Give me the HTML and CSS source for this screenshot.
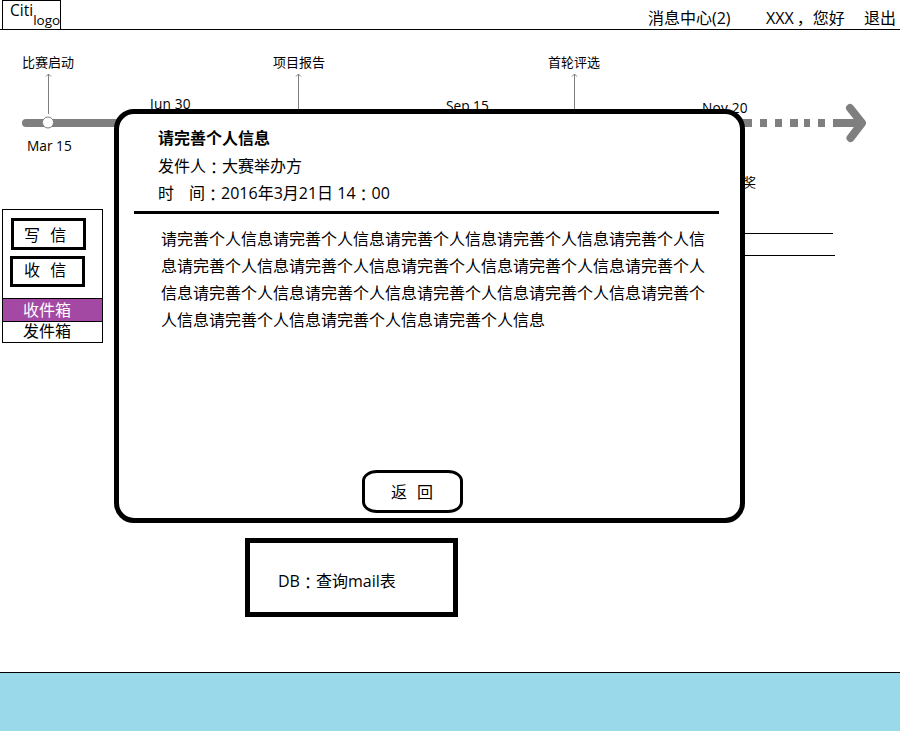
FILE: index.html
```
<!DOCTYPE html>
<html lang="zh-CN">
<head>
<meta charset="utf-8">
<title>消息中心</title>
<link rel="stylesheet" href="styles.css">
</head>
<body>
<div class="page">
  <header class="header">
    <div class="logo"><span>Citi</span><span class="logo-sub">logo</span></div>
    <nav class="nav">
      <span class="nav-messages">消息中心(2)</span>
      <span class="nav-user">XXX<span class="comma">，</span>您好</span>
      <span class="nav-exit">退出</span>
    </nav>
  </header>

  <section class="timeline">
    <svg class="track" width="900" height="179" viewBox="0 30 900 179">
      <g stroke="#7f7f7f" fill="none">
        <path d="M26 123H130" stroke-width="8" stroke-linecap="round"/>
        <path d="M740 123H752M760 123H767M775 123H782M790 123H798M804 123H810M818 123H825M833 123H862" stroke-width="8"/>
        <path d="M850 108L862 123L850.500 138" stroke-width="8" stroke-linecap="round" stroke-linejoin="round"/>
        <path d="M48.500 114V74M46 76.500L48.500 74L51 76.500M298.500 114V74M296 76.500L298.500 74L301 76.500M574.500 114V74M572 76.500L574.500 74L577 76.500"/>
        <circle cx="48" cy="122.500" r="5.500" fill="#fff"/>
      </g>
    </svg>
    <div class="stages"><span>比赛启动</span><span>项目报告</span><span>首轮评选</span></div>
    <div class="dates"><span>Jun 30</span><span>Sep 15</span><span>Nov 20</span></div>
    <div class="start-date">Mar 15</div>
    <div class="award">奖</div>
  </section>

  <main class="main">
    <aside class="sidebar">
      <div class="side-button write">写&nbsp; 信</div>
      <div class="side-button receive">收&nbsp; 信</div>
      <div class="folder active">收件箱</div>
      <div class="folder">发件箱</div>
    </aside>
    <div class="mail-list"><div class="mail-row"></div><div class="mail-row second"></div></div>
  </main>

  <div class="db-note">DB<span class="colon" lang="zh-TW">：</span>查询mail表</div>
  <footer class="footer"></footer>

  <div class="modal">
    <div class="modal-head">
      <div class="title">请完善个人信息</div>
      <div>发件人<span class="colon" lang="zh-TW">：</span>大赛举办方</div>
      <div class="time"><span class="label">时</span><span>间<span class="colon" lang="zh-TW">：</span></span><span class="stamp">2016年3月21日 14<span class="colon" lang="zh-TW">：</span>00</span></div>
    </div>
    <p class="message">请完善个人信息请完善个人信息请完善个人信息请完善个人信息请完善个人信息请完善个人信息请完善个人信息请完善个人信息请完善个人信息请完善个人信息请完善个人信息请完善个人信息请完善个人信息请完善个人信息请完善个人信息请完善个人信息请完善个人信息请完善个人信息</p>
    <div class="back">返<span>回</span></div>
  </div>
</div>
</body>
</html>
```
FILE: styles.css
```
* { box-sizing: border-box; }
body {
  margin: 0;
  background: #fff;
  color: #000;
  font: 16px/22px "Open Sans", "Noto Sans CJK SC", sans-serif;
}
.page {
  position: relative;
  display: flex;
  flex-direction: column;
  width: 900px;
  height: 731px;
  overflow: hidden;
  white-space: nowrap;
}
.colon {
  font-family: "Noto Sans CJK TC", sans-serif;
  line-height: 1;
  vertical-align: -2px;
}
.comma { padding-left: 3px; }

.header {
  display: flex;
  justify-content: space-between;
  height: 30px;
  border-bottom: 1px solid #000;
}
.logo {
  display: flex;
  width: 59px;
  height: 29px;
  margin-left: 2px;
  padding-left: 7px;
  border: 1px solid #000;
  border-bottom: 0;
  font-size: 15.500px;
  line-height: 19px;
}
.logo-sub { padding-top: 10px; font-size: 13.5px; }
.nav { display: flex; padding: 7px 4px 0 0; }
.nav-messages { width: 118px; }
.nav-user { width: 98px; }

.timeline {
  display: grid;
  height: 179px;
  font-size: 13.7px;
  line-height: 20px;
}
.timeline > * { grid-area: 1 / 1; }
.stages { display: flex; padding: 22px 0 0 22px; font-size: 13px; }
.stages span { width: 251px; }
.stages span:nth-child(2) { width: 275px; }
.dates { display: flex; align-items: flex-start; padding: 64px 0 0 150px; }
.dates span { width: 296px; }
.dates span:first-child { letter-spacing: 0.2px; }
.dates span:nth-child(2) { width: 256px; padding-top: 2px; }
.dates span:nth-child(3) { width: 60px; padding-top: 4px; letter-spacing: 0.2px; }
.start-date { padding: 106px 0 0 27px; }
.award { padding: 142px 0 0 743px; font-size: 13px; }

.main { display: flex; height: 134px; }
.sidebar {
  width: 101px;
  height: 134px;
  margin-left: 2px;
  border: 1px solid #000;
}
.side-button {
  width: 75px;
  height: 31px;
  padding-left: 11px;
  border: 3px solid #000;
  line-height: 23px;
  word-spacing: 1px;
}
.write { height: 32px; margin: 8px 0 6px 8px; line-height: 28px; padding-left: 10px; }
.receive { margin: 0 0 11px 7px; }
.folder { height: 20px; padding-left: 20px; line-height: 19px; }
.active {
  height: 24px;
  border: solid #000;
  border-width: 1px 0;
  background: #a349a4;
  color: #fff;
  line-height: 23px;
}
.mail-list { width: 595px; margin-left: 137px; }
.mail-row { width: 593px; height: 25px; border-bottom: 1px solid #000; }
.mail-row.second { width: 595px; height: 22px; }

.db-note {
  width: 213px;
  height: 79px;
  margin: 195px 0 0 245px;
  padding-left: 28px;
  border: 5px solid #000;
  line-height: 77px;
}
.footer {
  height: 59px;
  margin-top: auto;
  border-top: 1px solid #000;
  background: #99d9ea;
}

.modal {
  position: absolute;
  left: 114px;
  top: 109px;
  width: 631px;
  height: 414px;
  padding: 0 21px 0 15px;
  border: 5px solid #000;
  border-radius: 20px;
  background: #fff;
}
.modal-head {
  height: 100px;
  padding: 10px 0 0 24px;
  border-bottom: 3px solid #000;
  line-height: 27px;
}
.title { height: 29px; font-weight: 700; line-height: 28px; }
.time { display: flex; }
.label { width: 31px; }
.message {
  width: 545px;
  margin: 12px 0 0 27px;
  line-height: 27px;
  white-space: normal;
}
.back {
  display: flex;
  justify-content: center;
  gap: 10px;
  width: 101px;
  height: 43px;
  margin: 136px 0 0 228px;
  padding-right: 1px;
  border: 3px solid #000;
  border-radius: 15px / 11px;
  line-height: 38px;
}
```
